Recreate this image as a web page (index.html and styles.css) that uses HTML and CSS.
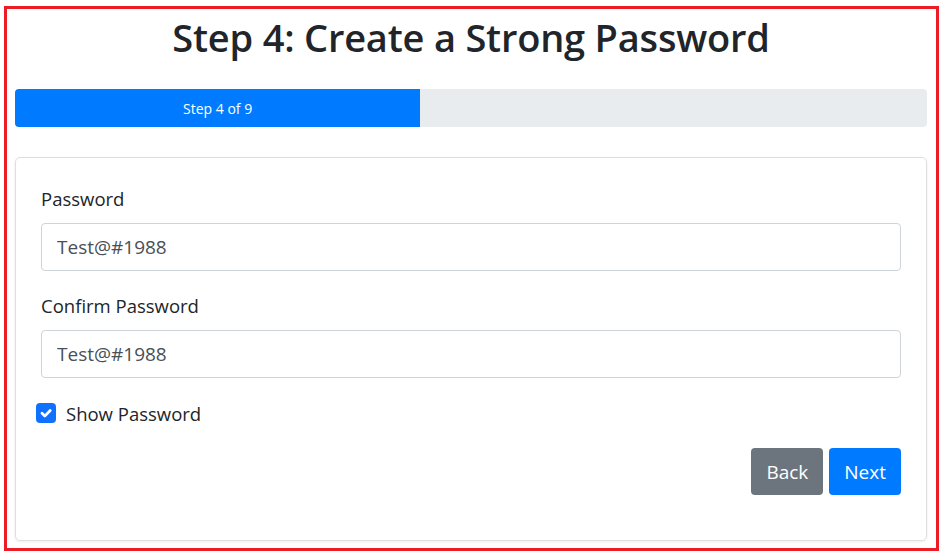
FILE: index.html
```html
<!DOCTYPE html>
<html lang="en">
<head>
<meta charset="utf-8">
<title>Step 4: Create a Strong Password</title>
<link rel="stylesheet" href="styles.css">
</head>
<body>
<div class="frame">
  <h1 class="title">Step 4: Create a Strong Password</h1>
  <div class="progress">
    <div class="progress-bar" style="width: 44.44%">Step 4 of 9</div>
  </div>
  <div class="card">
    <form class="card-body">
      <div class="form-group">
        <label class="label" for="pw">Password</label>
        <input class="input" id="pw" type="text" value="Test@#1988">
      </div>
      <div class="form-group">
        <label class="label" for="cpw">Confirm Password</label>
        <input class="input" id="cpw" type="text" value="Test@#1988">
      </div>
      <label class="check">
        <span class="check-box">
          <svg viewBox="0 0 20 20" width="20" height="20"><path d="M6 10.3l2.8 2.8l5.4-5.6" fill="none" stroke="#fff" stroke-width="2.8" stroke-linecap="round" stroke-linejoin="round"/></svg>
        </span>
        <span class="check-text">Show Password</span>
      </label>
      <div class="actions">
        <button type="button" class="btn btn-back">Back</button>
        <button type="button" class="btn btn-next">Next</button>
      </div>
    </form>
  </div>
</div>
</body>
</html>
```

FILE: styles.css
```css
* { box-sizing: border-box; }
html, body { margin: 0; padding: 0; background: #fff; }
body {
  font-family: "Open Sans", "Noto Sans", "Liberation Sans", sans-serif;
  color: #212529;
}
.frame {
  margin: 6px 0 0 4px;
  width: 935px;
  height: 545px;
  border: 3px solid #ed1c24;
  padding: 0 9px 0 8px;
}
.title {
  margin: 0;
  padding-top: 4px;
  height: 80px;
  font-size: 38px;
  line-height: 48px;
  font-weight: 600;
  text-align: center;
  color: #212529;
  letter-spacing: -0.2px;
}
.progress {
  height: 38px;
  background: #e9ecef;
  border-radius: 4px;
  overflow: hidden;
  display: flex;
}
.progress-bar {
  background: #007bff;
  color: #fff;
  font-size: 14px;
  display: flex;
  align-items: center;
  justify-content: center;
}
.card {
  margin-top: 30px;
  height: 384px;
  border: 1px solid #dfdfdf;
  border-radius: 5px;
  box-shadow: 0 1px 3px rgba(0,0,0,0.08);
}
.card-body {
  margin: 0;
  padding: 27px 25px 0 25px;
  display: flex;
  flex-direction: column;
}
.form-group {
  display: flex;
  flex-direction: column;
  margin-bottom: 21px;
}
.label {
  font-size: 18.5px;
  line-height: 27px;
  margin-bottom: 11px;
  color: #212529;
}
.input {
  height: 48px;
  border: 1px solid #ced4da;
  border-radius: 4px;
  padding: 0 15px;
  font-family: inherit;
  font-size: 19px;
  color: #495057;
  background: #fff;
  outline: none;
}
.check {
  display: flex;
  align-items: center;
  gap: 10px;
  margin-left: -5px;
  margin-top: 4px;
  height: 20px;
}
.check-box {
  width: 20px;
  height: 20px;
  border-radius: 4px;
  background: #1070ff;
  display: flex;
}
.check-text {
  font-size: 18.5px;
  line-height: 27px;
  color: #212529;
}
.actions {
  display: flex;
  justify-content: flex-end;
  gap: 6px;
  margin-top: 25px;
}
.btn {
  height: 47px;
  border: none;
  border-radius: 4px;
  padding: 0 15px;
  font-family: inherit;
  font-size: 19px;
  color: #fff;
}
.btn-back { background: #6c757d; }
.btn-next { background: #007bff; }
```
